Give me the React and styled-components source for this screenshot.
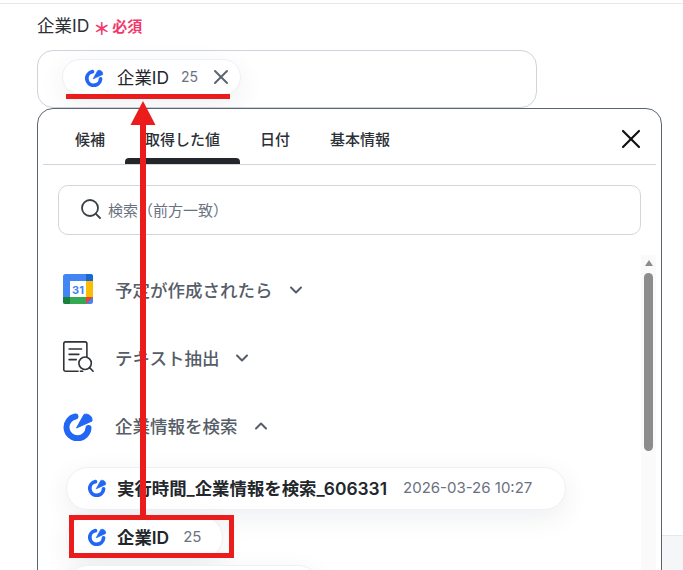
import React from 'react';
import styled, { createGlobalStyle } from 'styled-components';
import { ChevronDown, ChevronUp, Search, X } from 'lucide-react';

const GlobalStyle = createGlobalStyle`
	html, body {
		margin: 0;
		padding: 0;
		height: 570px;
		overflow: hidden;
		background: #fff;
		font-family: Inter, "Noto Sans CJK JP", sans-serif;
	}
`;

const Page = styled.div`
	position: relative;
	width: 683px;
	height: 567px;
	overflow: hidden;
	box-sizing: border-box;
	border-top: 1px solid #e5e7eb;
	margin-top: 3px;
`;

const Form = styled.div`
	padding: 7px 0 0 37px;
`;

const LabelRow = styled.div`
	display: flex;
	align-items: center;
	height: 26px;
	font-size: 17.5px;
	color: #2b3036;
`;

const Asterisk = styled.span`
	margin-left: 4px;
	color: #f0386b;
	font-size: 17px;
	font-weight: 700;
	position: relative;
	top: 3px;
`;

const Required = styled.span`
	margin-left: 2px;
	color: #f0386b;
	font-size: 15px;
	font-weight: 700;
	position: relative;
	top: 1px;
`;

const Field = styled.div`
	box-sizing: border-box;
	width: 500px;
	height: 58px;
	margin-top: 13px;
	padding: 8px 0 0 24px;
	border: 1px solid #ced4dc;
	border-radius: 16px;
`;

const Chip = styled.div`
	display: inline-flex;
	align-items: center;
	box-sizing: border-box;
	width: ${(p) => (p.$width ? `${p.$width}px` : 'auto')};
	height: ${(p) => p.$height}px;
	padding: 0 ${(p) => p.$right}px ${(p) => p.$bottom || 0}px ${(p) => p.$left}px;
	background: #fff;
	border: 1px solid #eef0f6;
	border-radius: 24px;
	box-shadow: 0 8px 26px rgba(40, 50, 80, 0.08);
	white-space: nowrap;
`;

const ChipName = styled.span`
	margin-left: ${(p) => p.$gap}px;
	font-size: 17.4px;
	font-weight: ${(p) => p.$weight};
	color: #23272c;
`;

const ChipMeta = styled.span`
	margin-left: ${(p) => p.$gap}px;
	font-size: ${(p) => p.$size}px;
	color: #6a7280;
`;

const ChipClose = styled(X)`
	margin-left: 11px;
	color: #5b6470;
`;

const HelpText = styled.div`
	margin-left: 659px;
	font-size: 14px;
	line-height: 20px;
	color: #6a7280;
	white-space: nowrap;
	padding-top: ${(p) => p.$top}px;
`;

const FooterBand = styled.div`
	position: absolute;
	left: 662px;
	right: 0;
	top: 531px;
	bottom: 0;
	background: #f5f6f8;
	border-top: 1px solid #e5e7eb;
`;

const Popup = styled.div`
	position: absolute;
	z-index: 1;
	left: 37px;
	top: 104px;
	box-sizing: border-box;
	width: 625px;
	height: 500px;
	background: #fff;
	border: 1px solid #5b6470;
	border-radius: 16px;
	overflow: hidden;
`;

const TabBar = styled.div`
	display: flex;
	align-items: stretch;
	height: 56px;
	box-sizing: border-box;
	margin: 0 5px;
	padding-left: 12px;
	border-bottom: 1px solid #d1d6dd;
`;

const Tab = styled.div`
	position: relative;
	display: flex;
	align-items: center;
	padding: 4px 20px 0;
	font-size: 15px;
	font-weight: 500;
	color: #2b3036;

	&::after {
		content: '';
		display: ${(p) => (p.$active ? 'block' : 'none')};
		position: absolute;
		left: 0;
		right: 0;
		bottom: 0;
		height: 6px;
		background: #23272c;
		border-radius: 4px 4px 0 0;
	}
`;

const TabClose = styled(X)`
	margin: 5px 9px 0 auto;
	align-self: center;
	color: #111;
`;

const SearchBox = styled.div`
	display: flex;
	align-items: center;
	box-sizing: border-box;
	height: 50px;
	margin: 20px;
	padding: 0 0 2px 20px;
	border: 1px solid #d1d6dd;
	border-radius: 10px;
	font-size: 15px;
	color: #6a7280;
	gap: 5px;
`;

const Body = styled.div`
	display: flex;
	height: 400px;
	padding-right: 5px;
`;

const List = styled.div`
	flex: 1;
`;

const SectionRow = styled.div`
	display: flex;
	align-items: center;
	height: 68px;
	padding-left: 24px;
	font-size: 17.5px;
	font-weight: 500;
	color: #555d68;
`;

const SectionIcon = styled.div`
	display: flex;
	align-items: center;
	justify-content: center;
	width: 32px;
	height: 32px;
	margin-right: 21px;
`;

const Chevron = styled.span`
	display: flex;
	margin: 2px 0 0 13px;
`;

const ChipList = styled.div`
	display: flex;
	flex-direction: column;
	align-items: flex-start;
	gap: 6px;
	padding: 8px 0 0 28px;
`;

const ScrollTrack = styled.div`
	display: flex;
	flex-direction: column;
	align-items: center;
	width: 15px;
	background: #fafafa;
`;

const ScrollArrow = styled.div`
	margin-top: 5px;
	width: 0;
	height: 0;
	border-left: 4.5px solid transparent;
	border-right: 4.5px solid transparent;
	border-bottom: 6px solid #8c8c8c;
`;

const ScrollThumb = styled.div`
	width: 9px;
	height: 178px;
	margin-top: 7px;
	background: #8c8c8c;
	border-radius: 5px;
`;

const Annotation = styled.svg`
	position: absolute;
	z-index: 2;
	left: 0;
	top: -4px;
	width: 683px;
	height: 570px;
`;

function BrandIcon({ size }) {
	return (
		<svg width={size} height={size} viewBox="0 0 32 32" fill="none">
			<path d="M13.5 7.5 A 11 11 0 1 0 26.5 19" stroke="#2167f3" strokeWidth="6" strokeLinecap="round" />
			<path d="M14.5 19 L 22 5.5 A 6 6 0 0 1 30 12 Z" fill="#2167f3" stroke="#2167f3" strokeWidth="1" strokeLinejoin="round" />
		</svg>
	);
}

function CalendarIcon() {
	return (
		<svg width="32" height="32" viewBox="0 0 32 32">
			<rect x="1" y="1" width="30" height="30" rx="2.5" fill="#4285f4" />
			<path d="M24 1h4.500a2.500 2.500 0 0 1 2.500 2.500V8h-7z" fill="#1967d2" />
			<rect x="24" y="8" width="7" height="16" fill="#fbbc04" />
			<path d="M8 24h16v7H8z" fill="#34a853" />
			<path d="M1 24h7v7H3.500A2.500 2.500 0 0 1 1 28.500z" fill="#188038" />
			<path d="M24 24h7l-7 7z" fill="#ea4335" />
			<rect x="8" y="8" width="16" height="16" fill="#fff" />
			<text x="16" y="20.500" textAnchor="middle" fontSize="11" fontWeight="700" fontFamily="Inter, sans-serif" fill="#4285f4">
				31
			</text>
		</svg>
	);
}

function DocSearchIcon() {
	return (
		<svg width="36" height="36" viewBox="0 0 36 36" fill="none" stroke="#2f3439" strokeWidth="1.800">
			<path d="M18 34H4a2 2 0 0 1-2-2V3a2 2 0 0 1 2-2h22a2 2 0 0 1 2 2v15" strokeLinecap="round" />
			<path d="M8 9h14M8 15h11M8 21h8" strokeLinecap="round" />
			<path d="M24 34H20" />
			<circle cx="26" cy="25" r="7" />
			<path d="M31 30l4 4" strokeLinecap="round" />
		</svg>
	);
}

export default function App() {
	return (
		<Page>
			<GlobalStyle />
			<Form>
				<LabelRow>
					企業ID
					<Asterisk>＊</Asterisk>
					<Required>必須</Required>
				</LabelRow>
				<Field>
					<Chip $height={36} $left={21} $right={7} $bottom={1}>
						<BrandIcon size={20} />
						<ChipName $gap={13} $weight={400}>
							企業ID
						</ChipName>
						<ChipMeta $gap={12} $size={14}>
							25
						</ChipMeta>
						<ChipClose size={24} strokeWidth={2} />
					</Chip>
				</Field>
				<HelpText $top={165}>を入力してください</HelpText>
				<HelpText $top={143}>ださい</HelpText>
			</Form>
			<FooterBand />
			<Popup>
				<TabBar>
					<Tab>候補</Tab>
					<Tab $active>取得した値</Tab>
					<Tab>日付</Tab>
					<Tab>基本情報</Tab>
					<TabClose size={32} strokeWidth={1.600} />
				</TabBar>
				<SearchBox>
					<Search size={24} strokeWidth={1.800} color="#3a4048" />
					検索（前方一致）
				</SearchBox>
				<Body>
					<List>
						<SectionRow>
							<SectionIcon>
								<CalendarIcon />
							</SectionIcon>
							予定が作成されたら
							<Chevron>
								<ChevronDown size={20} strokeWidth={2.400} />
							</Chevron>
						</SectionRow>
						<SectionRow>
							<SectionIcon>
								<DocSearchIcon />
							</SectionIcon>
							テキスト抽出
							<Chevron>
								<ChevronDown size={20} strokeWidth={2.400} />
							</Chevron>
						</SectionRow>
						<SectionRow>
							<SectionIcon>
								<BrandIcon size={32} />
							</SectionIcon>
							企業情報を検索
							<Chevron>
								<ChevronUp size={20} strokeWidth={2.400} />
							</Chevron>
						</SectionRow>
						<ChipList>
							<Chip $height={43} $left={20} $right={33} $bottom={3}>
								<BrandIcon size={20} />
								<ChipName $gap={10} $weight={600}>
									実行時間_企業情報を検索_606331
								</ChipName>
								<ChipMeta $gap={16} $size={15}>
									2026-03-26 10:27
								</ChipMeta>
							</Chip>
							<Chip $height={43} $left={20} $right={21} $bottom={3}>
								<BrandIcon size={20} />
								<ChipName $gap={10} $weight={600}>
									企業ID
								</ChipName>
								<ChipMeta $gap={14} $size={15}>
									25
								</ChipMeta>
							</Chip>
							<Chip $height={43} $left={20} $right={21} $width={254} />
						</ChipList>
					</List>
					<ScrollTrack>
						<ScrollArrow />
						<ScrollThumb />
					</ScrollTrack>
				</Body>
			</Popup>
			<Annotation viewBox="0 0 683 570" fill="none">
				<path d="M66 96.500H230" stroke="#ea1c1c" strokeWidth="5" />
				<path d="M143 124V516" stroke="#ea1c1c" strokeWidth="6" />
				<path d="M143 101L155.500 125H130.500Z" fill="#ea1c1c" />
				<rect x="71.500" y="517.500" width="160" height="38" stroke="#ea1c1c" strokeWidth="5" />
			</Annotation>
		</Page>
	);
}
